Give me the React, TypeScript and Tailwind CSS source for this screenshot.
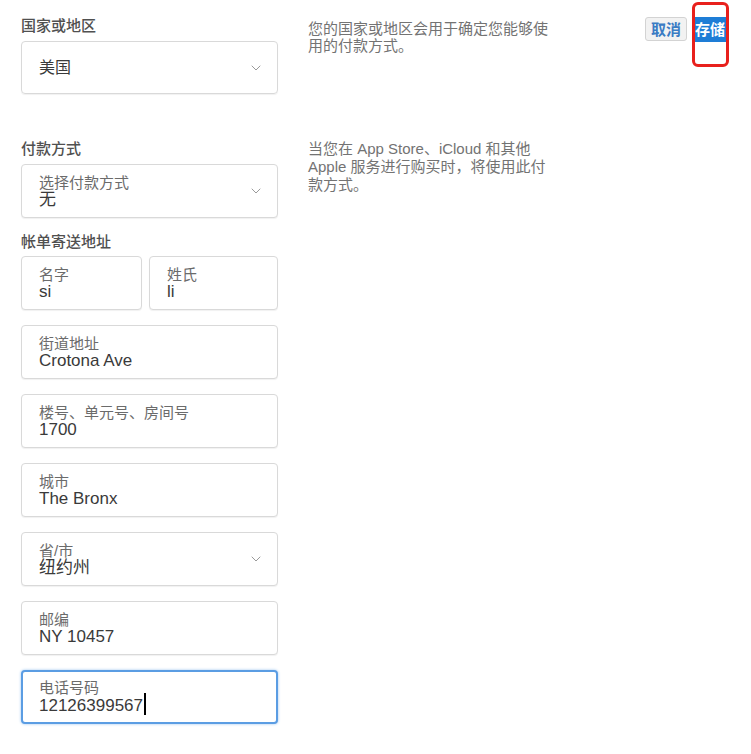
import { ChevronDown } from "lucide-react";

const font = { fontFamily: '"Liberation Sans", "Noto Sans CJK SC", sans-serif' };

const Field = ({ label, value, select, focus, className = "" }: { label: string; value: string; select?: boolean; focus?: boolean; className?: string }) => (
  <div
    className={`h-[54px] rounded-[4px] bg-white flex items-center pr-[12px] ${
      focus ? "border-2 border-[#5b9de3] shadow-[0_0_3px_#9cc4ee] pl-[16px]" : "border border-[#d9d9d9] shadow-[0_1px_1px_rgba(0,0,0,0.06)] pl-[17px]"
    } ${className}`}
  >
    <div className="flex-1 min-w-0">
      <div className="text-[15px] leading-[17px] text-[#6b6b6b] whitespace-nowrap">{label}</div>
      <div className="text-[17px] leading-[17px] text-[#3a3a3a] whitespace-nowrap flex items-center">
        {value}
        {focus && <span className="inline-block w-[1.5px] h-[22px] bg-black ml-[1px] -mt-[3px]" />}
      </div>
    </div>
    {select && <ChevronDown size={16} strokeWidth={1.3} className="text-[#8a8a8a] mr-[1px]" />}
  </div>
);

export default function App() {
  return (
    <div className="relative w-[751px] h-[754px] bg-white overflow-hidden" style={font}>
      <div className="flex pt-[16px]">
        <div className="ml-[21px] w-[257px]">
          <div className="text-[15px] leading-[20px] text-[#505050] font-medium">国家或地区</div>
          <div className="mt-[5px] h-[53px] rounded-[4px] border border-[#d9d9d9] shadow-[0_1px_1px_rgba(0,0,0,0.06)] flex items-center pl-[17px] pr-[12px]">
            <span className="flex-1 text-[16px] text-[#3a3a3a]">美国</span>
            <ChevronDown size={16} strokeWidth={1.3} className="text-[#8a8a8a] mr-[1px]" />
          </div>
        </div>
        <div className="ml-[30px] w-[260px] mt-[4px] text-[15px] leading-[17px] text-[#737373]">
          <div>您的国家或地区会用于确定您能够使</div>
          <div>用的付款方式。</div>
        </div>
        <div className="ml-auto mr-[23px] flex gap-[5px] mt-[1px] h-[24px]">
          <button className="w-[42px] h-[24px] rounded-[3px] border border-[#d3d3d3] bg-[#f2f2f2] text-[15px] font-bold text-[#3b7cc4] leading-none">取消</button>
          <button className="w-[36px] h-[25px] bg-[#1e7dd6] text-[15px] font-bold text-white leading-none">存储</button>
        </div>
      </div>

      <div className="flex mt-[45px]">
        <div className="ml-[21px] w-[257px]">
          <div className="text-[15px] leading-[20px] text-[#505050] font-medium">付款方式</div>
          <Field className="mt-[5px]" label="选择付款方式" value="无" select />
          <div className="mt-[14px] text-[15px] leading-[20px] text-[#505050] font-medium">帐单寄送地址</div>
          <div className="mt-[4px] flex flex-col gap-[15px]">
            <div className="flex gap-[7px]">
              <Field className="w-[121px]" label="名字" value="si" />
              <Field className="flex-1" label="姓氏" value="li" />
            </div>
            <Field label="街道地址" value="Crotona Ave" />
            <Field label="楼号、单元号、房间号" value="1700" />
            <Field label="城市" value="The Bronx" />
            <Field label="省/市" value="纽约州" select />
            <Field label="邮编" value="NY 10457" />
            <Field label="电话号码" value="12126399567" focus />
          </div>
        </div>
        <div className="ml-[30px] w-[260px] mt-[1px] text-[15px] leading-[18px] text-[#737373]">
          <div>当您在 App Store、iCloud 和其他</div>
          <div>Apple 服务进行购买时，将使用此付</div>
          <div>款方式。</div>
        </div>
      </div>

      <div className="absolute left-[692px] top-[2px] w-[37px] h-[65px] border-[3px] border-[#e8201c] rounded-[6px]" />
    </div>
  );
}
